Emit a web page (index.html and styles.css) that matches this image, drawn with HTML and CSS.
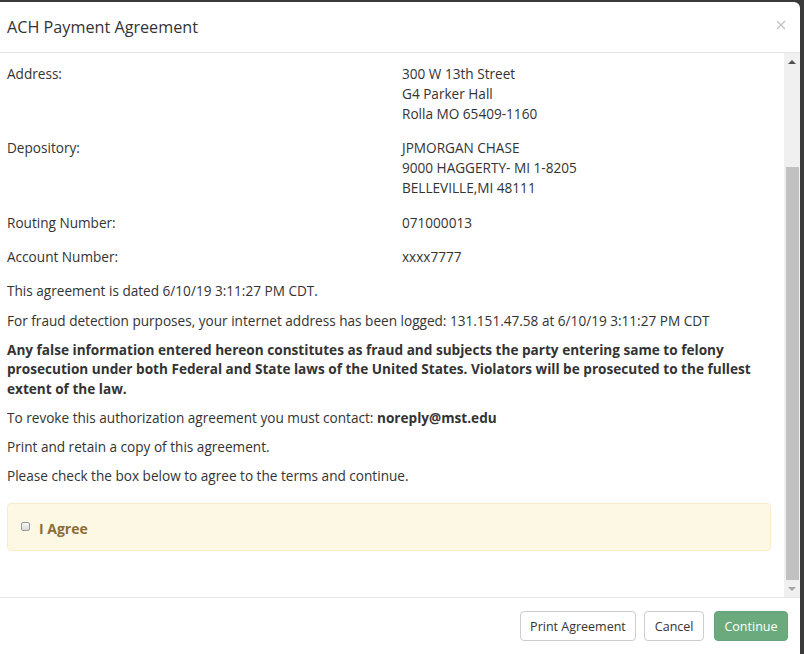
FILE: index.html
```html
<!DOCTYPE html>
<html>
<head>
<meta charset="utf-8">
<title>ACH Payment Agreement</title>
<link rel="stylesheet" href="styles.css">
</head>
<body>
<div class="modal">
  <div class="modal-header">
    <h4 class="modal-title">ACH Payment Agreement</h4>
    <span class="close" aria-label="Close">
      <svg width="10" height="10" viewBox="0 0 10 10"><path d="M1 1 L9 9 M9 1 L1 9" stroke="#c4c4c4" stroke-width="1.4" fill="none"/></svg>
    </span>
  </div>
  <div class="modal-body">
    <div class="content">
      <div class="row">
        <div class="label">Address:</div>
        <div class="value">300 W 13th Street<br>G4 Parker Hall<br>Rolla MO 65409-1160</div>
      </div>
      <div class="row">
        <div class="label">Depository:</div>
        <div class="value">JPMORGAN CHASE<br>9000 HAGGERTY- MI 1-8205<br>BELLEVILLE,MI 48111</div>
      </div>
      <div class="row">
        <div class="label">Routing Number:</div>
        <div class="value">071000013</div>
      </div>
      <div class="row">
        <div class="label">Account Number:</div>
        <div class="value">xxxx7777</div>
      </div>
      <p>This agreement is dated 6/10/19 3:11:27 PM CDT.</p>
      <p>For fraud detection purposes, your internet address has been logged: 131.151.47.58 at 6/10/19 3:11:27 PM CDT</p>
      <p class="bold">Any false information entered hereon constitutes as fraud and subjects the party entering same to felony prosecution under both Federal and State laws of the United States. Violators will be prosecuted to the fullest extent of the law.</p>
      <p>To revoke this authorization agreement you must contact: <strong>noreply@mst.edu</strong></p>
      <p>Print and retain a copy of this agreement.</p>
      <p>Please check the box below to agree to the terms and continue.</p>
      <div class="alert">
        <span class="checkbox"></span>
        <span class="agree">I Agree</span>
      </div>
    </div>
    <div class="scrollbar">
      <div class="sb-btn"><span class="tri-up"></span></div>
      <div class="sb-space"></div>
      <div class="sb-thumb"></div>
      <div class="sb-btn"><span class="tri-down"></span></div>
    </div>
  </div>
  <div class="modal-footer">
    <button class="btn">Print Agreement</button>
    <button class="btn btn-cancel">Cancel</button>
    <button class="btn btn-success">Continue</button>
  </div>
</div>
</body>
</html>
```
FILE: styles.css
```css
html, body {
  margin: 0;
  padding: 0;
}
body {
  background: #3a3a3a;
  font-family: "Open Sans", "Noto Sans", sans-serif;
  font-size: 13.6px;
  line-height: 20px;
  color: #333;
  width: 804px;
  height: 654px;
  overflow: hidden;
}
.modal {
  width: 800px;
  height: 652px;
  margin-top: 2px;
  background: #fff;
  border-top-right-radius: 6px;
  display: flex;
  flex-direction: column;
  overflow: hidden;
}
.modal-header {
  height: 50px;
  flex: none;
  border-bottom: 1px solid #e5e5e5;
  display: flex;
  align-items: center;
  justify-content: space-between;
  padding: 0 14px 0 7px;
}
.modal-title {
  margin: 0;
  font-size: 16.2px;
  font-weight: 400;
  line-height: 20px;
  color: #333;
}
.close {
  display: flex;
  width: 10px;
  height: 10px;
  margin-top: -5px;
}
.modal-body {
  height: 544px;
  flex: none;
  display: flex;
}
.content {
  flex: 1;
  padding: 11px 13px 0 7px;
  overflow: hidden;
}
.row {
  display: grid;
  grid-template-columns: 369px 1fr;
  column-gap: 26px;
  margin-bottom: 14.33px;
}
p {
  margin: 0 0 9.3px;
}
.bold {
  font-weight: 700;
  line-height: 19.5px;
}
strong {
  font-weight: 700;
}
.alert {
  margin-top: 17px;
  height: 46px;
  background: #fcf8e3;
  border: 1px solid #faebcc;
  border-radius: 4px;
  display: flex;
  align-items: center;
  padding: 0 13px;
}
.checkbox {
  width: 7px;
  height: 7px;
  border: 1px solid #9a9a9a;
  border-radius: 2px;
  background: linear-gradient(#f6f6f6, #dadada);
  margin-top: -2px;
}
.agree {
  margin-left: 9px;
  font-weight: 700;
  font-size: 14px;
  color: #8a6d3b;
  margin-top: 3px;
}
.scrollbar {
  width: 16px;
  flex: none;
  background: #f0f0f0;
  display: flex;
  flex-direction: column;
  align-items: center;
}
.sb-btn {
  height: 17px;
  width: 16px;
  display: flex;
  align-items: center;
  justify-content: center;
  flex: none;
}
.sb-space {
  height: 97px;
  flex: none;
}
.sb-thumb {
  height: 413px;
  width: 13px;
  background: #c1c1c1;
  flex: none;
}
.tri-up {
  width: 0;
  height: 0;
  border-left: 4px solid transparent;
  border-right: 4px solid transparent;
  border-bottom: 4px solid #505050;
}
.tri-down {
  width: 0;
  height: 0;
  border-left: 4px solid transparent;
  border-right: 4px solid transparent;
  border-top: 4px solid #a3a3a3;
}
.modal-footer {
  flex: 1;
  border-top: 1px solid #e5e5e5;
  display: flex;
  justify-content: flex-end;
  align-items: flex-start;
  padding: 13px 12px 0 0;
}
.btn {
  height: 30px;
  padding: 0 9.5px;
  font-family: "Open Sans", "Noto Sans", sans-serif;
  font-size: 12.5px;
  color: #333;
  background: #fff;
  border: 1px solid #ccc;
  border-radius: 4px;
  margin-left: 8px;
}
.btn-success {
  margin-left: 10px;
  background: #6aaa7c;
  border-color: #64a376;
  color: #fff;
}
```
